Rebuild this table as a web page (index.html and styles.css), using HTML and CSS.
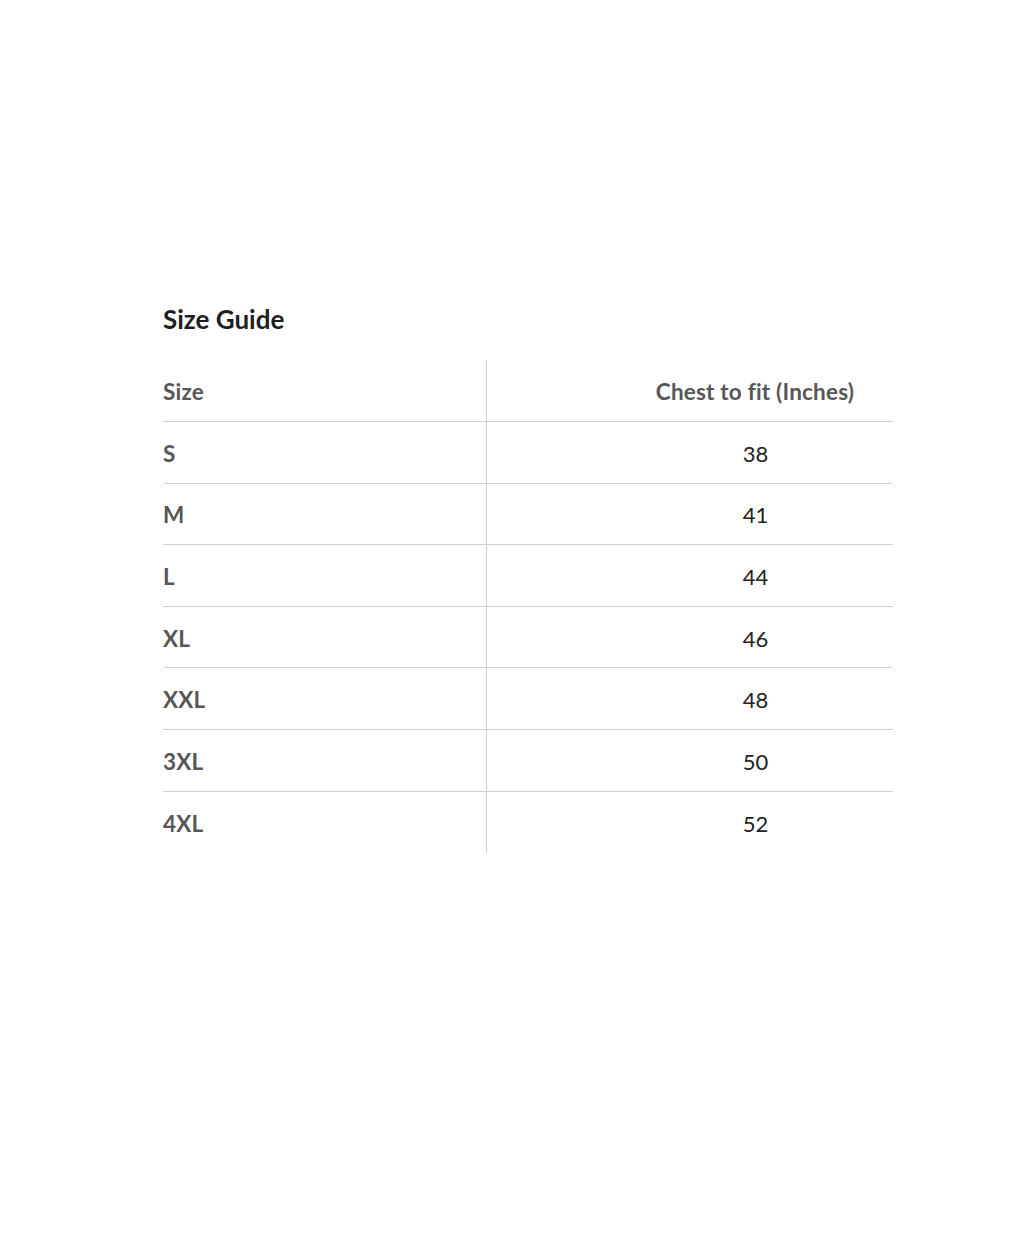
FILE: index.html
```html
<!DOCTYPE html>
<html lang="en">
<head>
<meta charset="utf-8">
<title>Size Guide</title>
<link rel="stylesheet" href="styles.css">
</head>
<body>
<main class="page">
  <section class="guide">
    <h2 class="guide-title">Size Guide</h2>
    <div class="size-table">
      <div class="cell head size">Size</div>
      <div class="cell head val">Chest to fit (Inches)</div>
      <div class="cell size">S</div><div class="cell val">38</div>
      <div class="cell size">M</div><div class="cell val">41</div>
      <div class="cell size">L</div><div class="cell val">44</div>
      <div class="cell size">XL</div><div class="cell val">46</div>
      <div class="cell size">XXL</div><div class="cell val">48</div>
      <div class="cell size">3XL</div><div class="cell val">50</div>
      <div class="cell size last">4XL</div><div class="cell val last">52</div>
    </div>
  </section>
</main>
</body>
</html>
```

FILE: styles.css
```css
html, body {
  margin: 0;
  padding: 0;
  background: #ffffff;
}
body {
  font-family: Lato, "Liberation Sans", sans-serif;
  color: #222;
}
.page {
  width: 1024px;
  height: 1251px;
  box-sizing: border-box;
  padding: 303px 0 0 163px;
}
.guide-title {
  margin: 0 0 25px 0;
  font-size: 26px;
  font-weight: 700;
  line-height: 32px;
  color: #1f1f1f;
}
.size-table {
  display: grid;
  grid-template-columns: 323px 407px;
  grid-template-rows: 62px;
  grid-auto-rows: 61.6px;
  width: 730px;
}
.cell {
  display: flex;
  align-items: center;
  padding-top: 2px;
  font-size: 22px;
  font-variant-ligatures: none;
  border-bottom: 1px solid #cfcfcf;
  box-sizing: border-box;
}
.cell.last {
  border-bottom: none;
}
.size {
  font-weight: 700;
  font-size: 22.5px;
  letter-spacing: 0.2px;
  color: #575757;
}
.val {
  justify-content: center;
  padding-left: 131px;
  border-left: 1px solid #cfcfcf;
  color: #222;
}
.head.val {
  font-weight: 700;
  font-size: 22.5px;
  letter-spacing: 0.2px;
  padding-left: 130px;
  color: #575757;
}
```
